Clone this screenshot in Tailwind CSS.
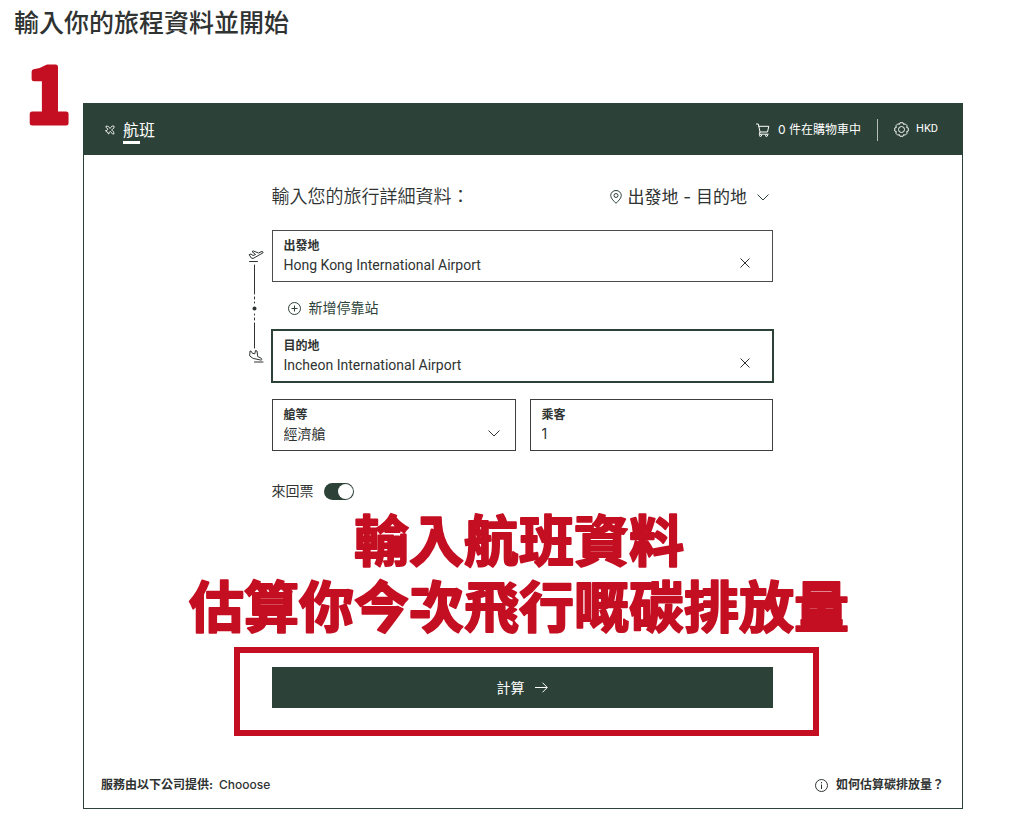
<!DOCTYPE html>
<html lang="zh-Hant">
<head>
  <meta charset="UTF-8" />
  <meta name="viewport" content="width=device-width, initial-scale=1.0" />
  <title>輸入你的旅程資料並開始</title>
  <script src="https://cdn.jsdelivr.net/npm/@tailwindcss/browser@4"></script>
</head>
<body class="min-h-screen bg-white text-[#2f3332] font-[Inter,'Noto_Sans_CJK_TC',sans-serif]">
  <h1 class="pt-[7px] pl-3.5 text-[25px] leading-8 font-medium">輸入你的旅程資料並開始</h1>

  <div class="flex pr-[61px]">
    <!-- step number -->
    <svg class="mt-4 h-[80px] w-[83px] shrink-0 overflow-visible font-['Noto_Sans_CJK_TC',sans-serif] text-[76px] font-bold" viewBox="0 0 83 80" fill="#c40f22" stroke="#c40f22" stroke-width="5" stroke-linejoin="round"><text x="26" y="68">1</text></svg>

    <main class="mt-16 grow border border-[#2c4238]">
      <header class="flex h-[51px] items-center justify-between bg-[#2c4238] pl-[21px] pr-6 text-white">
        <nav class="flex items-center gap-2">
          <svg class="size-[10px]" viewBox="0 0 20 20" fill="none" stroke="currentColor" stroke-width="1.6" stroke-linejoin="round"><path d="M2 2l5 1 3 4 4-5 4 0 0 4-5 4 4 3 1 5-3 0-4-5-3 2 0 3-2-1-1-3-3-1-1-2 3 0 2-3-4-3z"/></svg>
          <a href="#" class="relative text-base leading-6">航班<span class="absolute left-0 -bottom-0.5 h-[3px] w-[17px] bg-white"></span></a>
        </nav>
        <div class="flex items-center">
          <a href="#" class="flex items-center gap-2 text-xs">
            <svg class="size-[14px]" viewBox="0 0 14 14" fill="none" stroke="currentColor" stroke-linejoin="round" stroke-linecap="round"><path d="M.5 1h1.800l1.700 8h7.500l1.300-5.700H3M4 9l-.8 2.200h9"/><circle cx="4.500" cy="12.500" r="1"/><circle cx="10.500" cy="12.500" r="1"/></svg>
            0 件在購物車中
          </a>
          <span class="mx-4 h-[22px] w-px bg-[#b4bdb8]"></span>
          <button type="button" class="flex items-center gap-[7px] text-[11px] font-[Roboto,sans-serif]">
            <svg class="size-[15px]" viewBox="0 0 16 16" fill="none" stroke="currentColor" stroke-linejoin="round"><circle cx="8" cy="8" r="3.200"/><path d="M6.300.8h3.400l.5 1.700 1.800-.5 2 2-.5 1.800 1.700.5v3.400l-1.700.5.5 1.800-2 2-1.800-.5-.5 1.700H6.300l-.5-1.700-1.800.5-2-2 .5-1.800-1.700-.5V6.300l1.700-.5L2 4l2-2 1.800.5z"/></svg>
            HKD
          </button>
        </div>
      </header>

      <form class="pt-[30px] pr-0.5">
        <div class="mx-auto w-[501px]">
          <div class="flex items-center justify-between pr-1">
            <h2 class="text-lg leading-6 font-[350]">輸入您的旅行詳細資料：</h2>
            <label class="relative flex items-center gap-1.5">
              <svg class="h-[14px] w-3" viewBox="0 0 12 14" fill="none" stroke="#2c4238"><path d="M6 13.300C4.500 11.500.7 8.800.7 5.500a5.300 5 0 0 1 10.600 0C11.300 8.800 7.500 11.500 6 13.300z"/><circle cx="6" cy="5.500" r="2"/></svg>
              <select aria-label="行程類型" class="w-[141px] appearance-none text-[17px] leading-6">
                <option>出發地 - 目的地</option>
              </select>
              <svg class="pointer-events-none absolute right-0 h-[7px] w-3" viewBox="0 0 12 7" fill="none" stroke="#2c4238"><path d="M.5.5 6 6 11.500.5"/></svg>
            </label>
          </div>

          <div class="mt-[21px] -ml-6 flex gap-2">
            <!-- take-off, stops and landing -->
            <svg class="mt-[19px] h-[116px] w-4 shrink-0" viewBox="0 0 16 116" fill="none" stroke="#2f3332" stroke-linejoin="round" stroke-linecap="round">
              <path d="M1.500 12.500h8M1.500 5.500 3 5l2 1.500 2.500-1L4 2.500 5.500 2l5 2 2.500-1.200c1.500-.6 2.500 0 2 1L5 9.500 3.500 9z"/>
              <path d="M6.500 16v29M6.500 48v2M6.500 53v1M6.500 65v1M6.500 69v2M6.500 74v25"/>
              <circle cx="6.500" cy="59.500" r="2" fill="#2f3332" stroke="none"/>
              <path d="M6.500 113h8.500M1.700 106.500l.3-4.500 1.300.3 1 2 2.500.5.700-3.300 1.500.5.700 5.500 3.300 1.700c1.500.9 1 2-.5 1.800L5.500 109.500z"/>
            </svg>

            <div class="grow">
              <div class="relative border border-[#4a4d4c] px-[11px] pt-[7px] pb-[5px]">
                <label for="from" class="block text-xs leading-4 font-bold">出發地</label>
                <input id="from" type="text" value="Hong Kong International Airport" class="block w-full pr-10 text-sm leading-[22px] outline-none font-[Roboto,sans-serif]" />
                <button type="button" aria-label="清除出發地" class="absolute right-[22px] bottom-[13px]">
                  <svg class="size-[10px]" viewBox="0 0 10 10" stroke="#2f3332"><path d="M.5.500l9 9M9.500.500l-9 9"/></svg>
                </button>
              </div>

              <div class="flex h-12 items-center pt-1 pl-4">
                <button type="button" class="flex items-center gap-2 text-sm text-[#2c4238]">
                  <svg class="size-[13px]" viewBox="0 0 13 13" fill="none" stroke="currentColor"><circle cx="6.500" cy="6.500" r="6"/><path d="M6.500 3.500v6M3.500 6.500h6"/></svg>
                  新增停靠站
                </button>
              </div>

              <div class="relative border border-[#2c4238] px-[11px] pt-[7px] pb-[5px] ring-1 ring-[#2c4238]">
                <label for="to" class="block text-xs leading-4 font-bold">目的地</label>
                <input id="to" type="text" value="Incheon International Airport" class="block w-full pr-10 text-sm leading-[22px] outline-none font-[Roboto,sans-serif]" />
                <button type="button" aria-label="清除目的地" class="absolute right-[22px] bottom-[13px]">
                  <svg class="size-[10px]" viewBox="0 0 10 10" stroke="#2f3332"><path d="M.5.500l9 9M9.500.500l-9 9"/></svg>
                </button>
              </div>
            </div>
          </div>

          <div class="mt-[17px] grid grid-cols-[244px_1fr] gap-3.5">
            <div class="relative border border-[#3c3f3e] px-[11px] pt-[7px] pb-[5px]">
              <label for="cabin" class="block text-xs leading-4 font-bold">艙等</label>
              <select id="cabin" class="block w-full appearance-none text-sm leading-[22px]">
                <option>經濟艙</option>
              </select>
              <svg class="pointer-events-none absolute right-[15px] bottom-[13px] h-[7px] w-3" viewBox="0 0 12 7" fill="none" stroke="#2f3332"><path d="M.5.5 6 6 11.500.5"/></svg>
            </div>
            <div class="border border-[#3c3f3e] px-[11px] pt-[7px] pb-[5px]">
              <label for="pax" class="block text-xs leading-4 font-bold">乘客</label>
              <input id="pax" type="text" inputmode="numeric" value="1" class="block w-full text-sm leading-[22px] outline-none" />
            </div>
          </div>

          <div class="mt-[30px] flex items-center gap-2.5">
            <label for="return" class="text-sm leading-5">來回票</label>
            <input id="return" type="checkbox" role="switch" checked class="h-[17px] w-[30px] appearance-none rounded-full bg-[#8d9692] p-px before:block before:size-[15px] before:rounded-full before:bg-white checked:bg-[#2c4238] checked:before:ml-[13px]" />
          </div>
        </div>

        <svg class="mx-auto mt-[7px] h-[132px] w-[680px] overflow-visible font-['Noto_Sans_CJK_TC',sans-serif] text-[55px] font-bold" viewBox="0 0 680 132" fill="#c40f22" stroke="#c40f22" stroke-width="2" stroke-linejoin="round" text-anchor="middle">
          <text x="337" y="53">輸入航班資料</text>
          <text x="337" y="119">估算你今次飛行嘅碳排放量</text>
        </svg>

        <div class="mx-auto mt-[7px] w-[585px] translate-x-1 border-6 border-[#c40f22] pt-3.5 pr-10 pb-[22px] pl-8">
          <button type="button" class="flex h-[41px] w-full items-center justify-center gap-2.5 bg-[#2c4238] text-sm text-white">
            計算
            <svg class="h-[11px] w-[13px]" viewBox="0 0 13 11" fill="none" stroke="currentColor"><path d="M0 5.500h12M7.500.7l4.800 4.800-4.800 4.800"/></svg>
          </button>
        </div>
      </form>

      <footer class="mt-[39px] flex items-center justify-between pr-[18px] pb-[13px] pl-[17px] text-xs leading-5">
        <span class="flex gap-1.5"><b>服務由以下公司提供:</b> <span class="font-medium">Chooose</span></span>
        <a href="#" class="flex items-center gap-2 font-bold">
          <svg class="size-[13px]" viewBox="0 0 13 13" fill="none" stroke="currentColor"><circle cx="6.500" cy="6.500" r="6"/><path d="M6.500 5.500v4.500M6.500 3v1.300"/></svg>
          如何估算碳排放量？
        </a>
      </footer>
    </main>
  </div>
</body>
</html>
